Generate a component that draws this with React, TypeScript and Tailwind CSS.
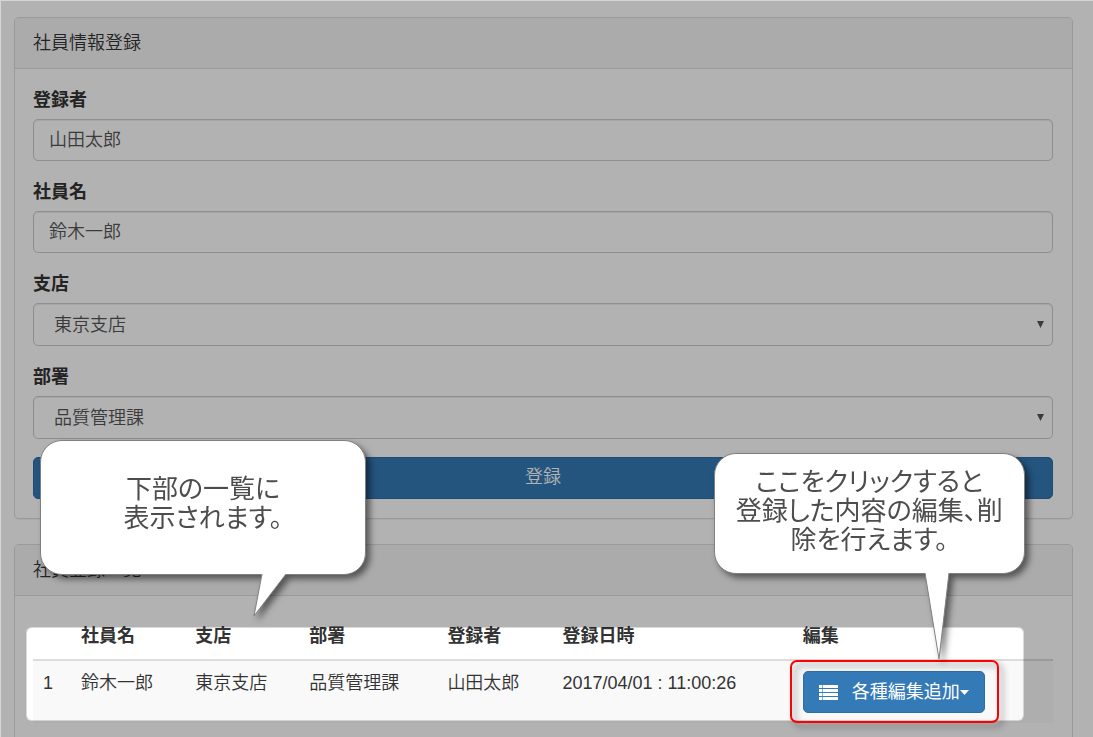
import React from "react";

const inputClass =
  "block h-[42px] w-full rounded-[5px] border border-[#ccc] bg-white px-[15px] pb-[4px] text-[#555] shadow-[inset_0_1px_1px_rgba(0,0,0,0.075)] outline-none";

function Panel({ title, children }: { title: string; children: React.ReactNode }) {
  return (
    <section className="mb-[25px] rounded-[5px] border border-[#ddd] bg-white shadow-[0_1px_1px_rgba(0,0,0,0.05)]">
      <h2 className="rounded-t-[4px] border-b border-[#ddd] bg-[#f5f5f5] py-[12px] pl-[18px] font-[350] leading-[26px]">
        {title}
      </h2>
      <div className="pb-[19px] pl-[18px] pr-[19px] pt-[18px]">{children}</div>
    </section>
  );
}

function TextField({ id, label, value }: { id: string; label: string; value: string }) {
  return (
    <div>
      <label htmlFor={id} className="mb-[6px] block font-bold leading-[25px]">
        {label}
      </label>
      <input id={id} type="text" defaultValue={value} className={inputClass} />
    </div>
  );
}

function SelectField({ id, label, options }: { id: string; label: string; options: string[] }) {
  return (
    <div>
      <label htmlFor={id} className="mb-[6px] block font-bold leading-[25px]">
        {label}
      </label>
      <div className="relative">
        <select
          id={id}
          className="block h-[43px] w-full appearance-none rounded-[5px] border border-[#ccc] bg-white px-[20px] text-[#555] shadow-[inset_0_1px_1px_rgba(0,0,0,0.075)] outline-none"
        >
          {options.map((o) => (
            <option key={o}>{o}</option>
          ))}
        </select>
        <svg
          className="pointer-events-none absolute right-[9px] top-[18px] h-[7px] w-[7px]"
          viewBox="0 0 7 7"
          aria-hidden="true"
        >
          <path d="M0 0h7L3.5 7z" fill="#555" />
        </svg>
      </div>
    </div>
  );
}

function ListIcon() {
  return (
    <svg className="h-[15px] w-[19px]" viewBox="0 0 19 15" fill="currentColor" aria-hidden="true">
      <path d="M0 0h3v3H0zM3.6 0H19v3H3.6zM0 4h3v3H0zM3.6 4H19v3H3.6zM0 8h3v3H0zM3.6 8H19v3H3.6zM0 12h3v3H0zM3.6 12H19v3H3.6z" />
    </svg>
  );
}

const head = ["", "社員名", "支店", "部署", "登録者", "登録日時", "編集"];
const row = ["1", "鈴木一郎", "東京支店", "品質管理課", "山田太郎", "2017/04/01 : 11:00:26"];

export default function App() {
  return (
    <main className="relative h-screen overflow-hidden bg-white pl-[14px] pr-[20px] pt-[17px] font-['Liberation_Sans','Noto_Sans_CJK_JP',sans-serif] text-lg font-[350] text-[#333]">
      <Panel title="社員情報登録">
        <form onSubmit={(e) => e.preventDefault()}>
          <div className="flex flex-col gap-[19px] pt-px">
            <TextField id="registrant" label="登録者" value="山田太郎" />
            <TextField id="employee" label="社員名" value="鈴木一郎" />
            <SelectField id="branch" label="支店" options={["東京支店"]} />
            <SelectField id="department" label="部署" options={["品質管理課"]} />
          </div>
          <button
            type="submit"
            className="mt-[18px] block h-[42px] w-full rounded-[5px] border border-[#2e6da4] bg-[#337ab7] pb-[2px] text-white"
          >
            登録
          </button>
        </form>
      </Panel>

      <Panel title="社員登録一覧">
        <div className="relative mb-[25px]">
          <table className="w-full table-fixed border-collapse text-left leading-[25px]">
            <colgroup>
              <col className="w-[3.73%]" />
              <col className="w-[11.19%]" />
              <col className="w-[11.19%]" />
              <col className="w-[13.54%]" />
              <col className="w-[11.29%]" />
              <col className="w-[23.55%]" />
              <col />
            </colgroup>
            <thead>
              <tr className="border-b-2 border-[#ddd]">
                {head.map((h) => (
                  <th key={h} scope="col" className="px-[10px] pb-[10px] pt-[10px] font-bold">
                    {h}
                  </th>
                ))}
              </tr>
            </thead>
            <tbody>
              <tr className="bg-[#f9f9f9] align-top">
                {row.map((c) => (
                  <td key={c} className="whitespace-nowrap p-[10px]">
                    {c}
                  </td>
                ))}
                <td className="p-[10px]">
                  <div className="relative w-fit">
                    <button
                      type="button"
                      className="flex h-[42px] items-center rounded-[5px] border border-[#2e6da4] bg-[#337ab7] px-[15px] font-normal text-white"
                    >
                      <ListIcon />
                      <span className="ml-[14px] whitespace-nowrap">各種編集追加</span>
                      <svg className="h-[5px] w-[9px]" viewBox="0 0 9 5" fill="currentColor" aria-hidden="true">
                        <path d="M0 0h9L4.5 5z" />
                      </svg>
                    </button>
                    <div className="pointer-events-none absolute -bottom-[10px] -left-[13px] -right-[14px] -top-[11px] z-20 rounded-[7px] border-2 border-[#f00] drop-shadow-[4px_4px_3px_rgba(0,0,0,0.45)]" />
                    <div className="absolute bottom-[53px] left-[-89px] z-30 w-[311px] drop-shadow-[4px_4px_3px_rgba(0,0,0,0.5)]">
                      <p className="h-[121px] rounded-[22px] border border-[#808080] bg-white pt-[14px] text-center text-[26px] font-normal leading-[29px] text-[#4d4d4d] [font-feature-settings:'palt']">
                        ここをクリックすると
                        <br />
                        登録した内容の編集、削
                        <br />
                        除を行えます。
                      </p>
                      <svg className="-mt-px ml-[211px] h-[87px] w-[25px]" viewBox="0 0 25 87" aria-hidden="true">
                        <path d="M0 0L14 86L24 0" fill="#fff" stroke="#808080" />
                      </svg>
                    </div>
                  </div>
                </td>
              </tr>
            </tbody>
          </table>

          <div className="pointer-events-none absolute -left-[7px] right-[29px] top-[13px] z-10 h-[94px] rounded-[6px] border border-black/15 shadow-[0_0_0_2000px_rgba(0,0,0,0.3)]" />

          <div className="absolute left-[7px] top-[-174px] z-30 w-[326px] drop-shadow-[4px_4px_3px_rgba(0,0,0,0.5)]">
            <p className="h-[135px] rounded-[22px] border border-[#808080] bg-white pt-[34px] text-center text-[26px] font-normal leading-[29px] text-[#4d4d4d] [font-feature-settings:'palt']">
              下部の一覧に
              <br />
              表示されます。
            </p>
            <svg className="-mt-px ml-[213px] h-[43px] w-[34px]" viewBox="0 0 34 43" aria-hidden="true">
              <path d="M9 0L1 42L33 0" fill="#fff" stroke="#808080" />
            </svg>
          </div>
        </div>
      </Panel>

      <div className="pointer-events-none absolute inset-0 z-10 border-l border-t border-[#d6d6d6]" />
    </main>
  );
}
